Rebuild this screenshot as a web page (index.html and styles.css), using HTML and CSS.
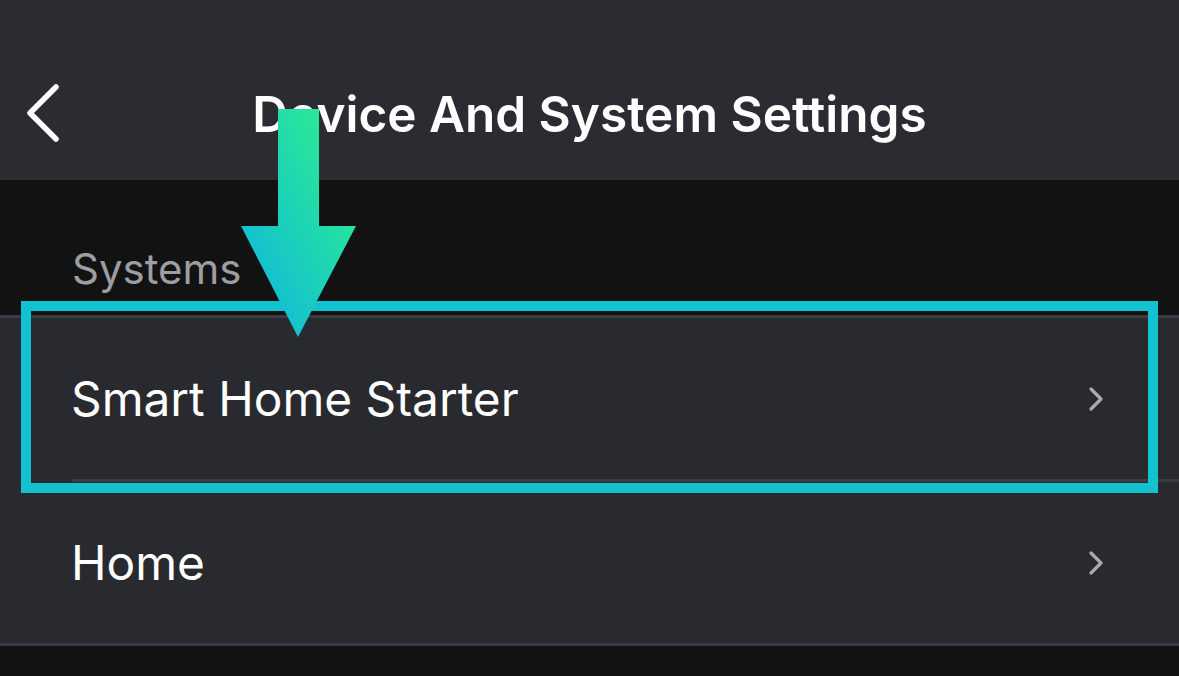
FILE: index.html
```html
<!DOCTYPE html>
<html lang="en">
<head>
  <meta charset="UTF-8">
  <meta name="viewport" content="width=device-width, initial-scale=1.0">
  <title>Device And System Settings</title>
  <link rel="stylesheet" href="styles.css">
</head>
<body>
  <!-- Top bar -->
  <header class="topbar">
    <button class="back-button" aria-label="Back">
      <svg width="40" height="62" viewBox="0 0 40 62">
        <polyline points="32,4 6,30 32,56" fill="none" stroke="#fff" stroke-width="5.5" stroke-linecap="round" stroke-linejoin="round"/>
      </svg>
    </button>
    <h1 class="title">Device And System Settings</h1>
    <div></div>
  </header>

  <!-- Systems group -->
  <div class="group-label">Systems</div>
  <ul class="settings-list">
    <li class="settings-row">
      <span>Smart Home Starter</span>
      <svg class="chevron" width="18" height="26" viewBox="0 0 18 26">
        <polyline points="4,3 14,13 4,23" fill="none" stroke="#a9aaad" stroke-width="3.2" stroke-linecap="round" stroke-linejoin="round"/>
      </svg>
    </li>
    <li class="settings-row">
      <span>Home</span>
      <svg class="chevron" width="18" height="26" viewBox="0 0 18 26">
        <polyline points="4,3 14,13 4,23" fill="none" stroke="#a9aaad" stroke-width="3.2" stroke-linecap="round" stroke-linejoin="round"/>
      </svg>
    </li>
  </ul>

  <!-- Annotation overlay -->
  <div class="highlight-box"></div>
  <svg class="pointer-arrow" width="116" height="230" viewBox="0 0 116 230">
    <defs>
      <linearGradient id="arrowGrad" x1="1" y1="0" x2="0" y2="1">
        <stop offset="0" stop-color="#33f28c"/>
        <stop offset="0.45" stop-color="#1ed7b0"/>
        <stop offset="1" stop-color="#0eb2e6"/>
      </linearGradient>
    </defs>
    <polygon points="37,0 78,0 78,117 115,117 57,228 0,117 37,117" fill="url(#arrowGrad)"/>
  </svg>
</body>
</html>
```

FILE: styles.css
```css
body {
  margin: 0;
  background-color: #121212;
  font-family: Inter, "Noto Sans", sans-serif;
  color: #ffffff;
  height: 676px;
  overflow: hidden;
  position: relative;
}

.topbar {
  height: 180px;
  box-sizing: border-box;
  padding-top: 48px;
  background: #2a2c31;
  display: grid;
  grid-template-columns: 1fr auto 1fr;
  align-items: center;
}

.back-button {
  justify-self: start;
  margin-left: 24px;
  background: transparent;
  border: none;
  padding: 0;
  display: flex;
}

.title {
  margin: 0;
  font-size: 49.5px;
  font-weight: 600;
  letter-spacing: 0;
}

.group-label {
  height: 135px;
  box-sizing: border-box;
  padding: 0 0 21px 72px;
  display: flex;
  align-items: flex-end;
  font-size: 42px;
  color: #9d9ea1;
}

.settings-list {
  list-style: none;
  margin: 0;
  padding: 0;
  border-top: 3px solid #3a3c41;
  border-bottom: 3px solid #3a3c41;
  background: #282a2f;
}

.settings-row {
  height: 161px;
  margin-left: 72px;
  padding-right: 74px;
  display: flex;
  align-items: center;
  justify-content: space-between;
  font-size: 47.8px;
  font-weight: 400;
}

.settings-row span {
  margin-left: -1px;
}

.settings-row + .settings-row {
  border-top: 3px solid #3a3c41;
}

.chevron {
  display: block;
}

.highlight-box {
  position: absolute;
  left: 21px;
  top: 301px;
  width: 1137px;
  height: 192px;
  box-sizing: border-box;
  border: 10px solid #13c2d0;
}

.pointer-arrow {
  position: absolute;
  left: 241px;
  top: 109px;
}
```
